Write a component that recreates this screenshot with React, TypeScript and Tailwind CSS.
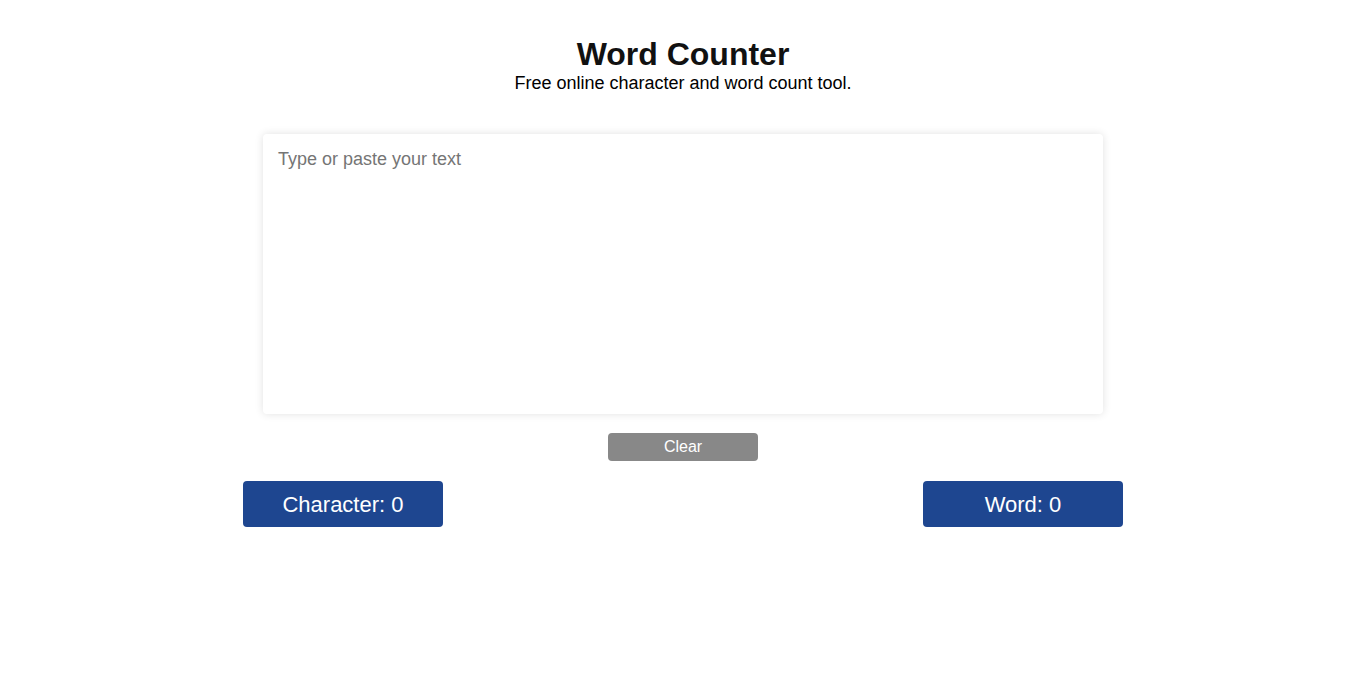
import React, { useState } from "react";

export default function App() {
  const [text, setText] = useState("");
  const chars = text.length;
  const words = text.trim() === "" ? 0 : text.trim().split(/\s+/).length;
  return (
    <div className="min-h-[675px] bg-white pt-[36px]" style={{ fontFamily: '"Liberation Sans", Arial, sans-serif' }}>
      <div className="mx-auto w-[880px]">
        <h1 className="text-center text-[32px] font-bold leading-[37px] text-[#111111]">Word Counter</h1>
        <p className="text-center text-[18px] leading-[21px] text-black">Free online character and word count tool.</p>
        <div className="mt-[40px] px-[20px]">
          <textarea
            value={text}
            onChange={(e) => setText(e.target.value)}
            placeholder="Type or paste your text"
            autoFocus
            className="block h-[280px] w-full resize-none rounded-[4px] bg-white p-[15px] text-[18px] leading-[21px] text-black shadow-[0_0_8px_rgba(0,0,0,0.12)] outline-none placeholder:text-[#757575]"
          />
        </div>
        <div className="mt-[19px] flex justify-center">
          <button
            onClick={() => setText("")}
            className="h-[28px] w-[150px] rounded-[4px] bg-[#888888] text-[16px] text-white"
          >
            Clear
          </button>
        </div>
        <div className="mt-[20px] flex justify-between">
          <div className="flex h-[46px] w-[200px] items-center justify-center rounded-[4px] bg-[#1e4690] text-[22px] text-white">
            Character: {chars}
          </div>
          <div className="flex h-[46px] w-[200px] items-center justify-center rounded-[4px] bg-[#1e4690] text-[22px] text-white">
            Word: {words}
          </div>
        </div>
      </div>
    </div>
  );
}
